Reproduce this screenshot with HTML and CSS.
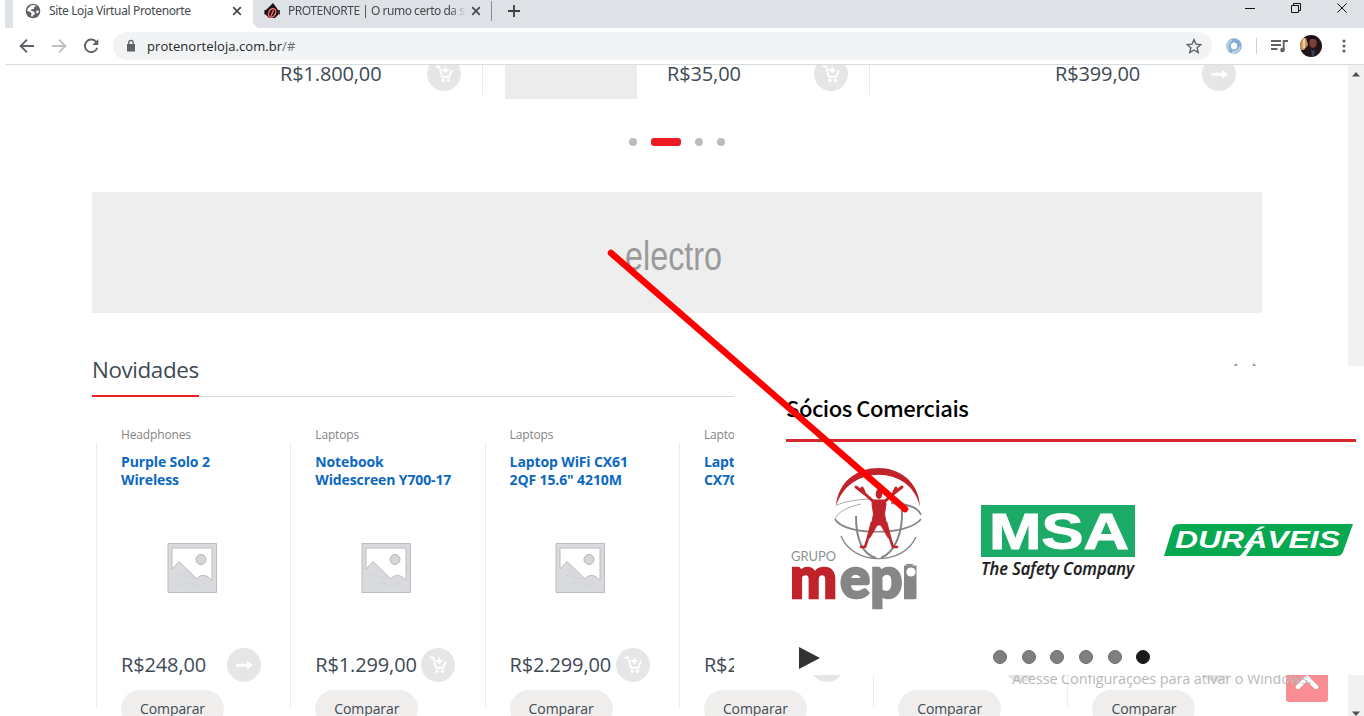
FILE: index.html
```html
<!DOCTYPE html>
<html lang="pt-BR">
<head>
<meta charset="utf-8">
<title>Site Loja Virtual Protenorte</title>
<link rel="stylesheet" href="styles.css">
</head>
<body>
<svg class="defs" width="0" height="0">
  <defs>
    <symbol id="cart" viewBox="0 0 34 34">
      <path d="M9.500 9.500h2.600l3 10.200h7.300l2.300-6" fill="none" stroke="#fff" stroke-width="1.900" stroke-linecap="round" stroke-linejoin="round"/>
      <path d="M18.300 9.500v4M16 12.800l2.300 2.500 2.300-2.500z" fill="#fff" stroke="#fff" stroke-width="1.600"/>
      <circle cx="16" cy="23.300" r="1.700" fill="#fff"/><circle cx="21.500" cy="23.300" r="1.700" fill="#fff"/>
    </symbol>
    <symbol id="arrow" viewBox="0 0 34 34">
      <path d="M10.500 17.200h11" stroke="#fff" stroke-width="3" stroke-linecap="round"/>
      <path d="M20.500 13.500l4.800 3.700-4.800 3.700z" fill="#fff" stroke="#fff" stroke-width="1" stroke-linejoin="round"/>
    </symbol>
    <symbol id="placeholder" viewBox="0 0 50 50">
      <path fill-rule="evenodd" d="M1 .500h48.500v49H1zM5 5v21l7-7.500 18 17.500c3-5 10-5 15 1.500V5z" fill="#d9dade" stroke="#bcbcbf"/>
      <circle cx="34" cy="16.500" r="5" fill="#d5d6da" stroke="#b4b4b6"/>
      <path d="M8 34l8-3 3 3 8 2M12 43l9-4 10 4 8-3" fill="none" stroke="#d1d2d6"/>
    </symbol>
  </defs>
</svg>

<div class="tabs">
  <div class="tab tab-active">
    <svg class="favicon" viewBox="0 0 16 16"><circle cx="8" cy="8" r="7.300" fill="#5f6368"/><path d="M6 2.200L2.800 5.400 2.200 8l3 .800 1.500 1.800-.700 1.700 1 2 .900-1.900 2.200-1.700-1-2-3.200-.900.600-1.600 2.300-.200.400-1.700 2.100-1.200L9 1.900zM11 8l2.800-.800-.500 2.600-1.500 1z" fill="#fff"/></svg>
    <span class="tab-title">Site Loja Virtual Protenorte</span>
    <svg class="close" viewBox="0 0 10 10"><path d="M1.200 1.200l7.600 7.600M8.800 1.200L1.200 8.800"/></svg>
  </div>
  <div class="tab tab-idle">
    <svg class="favicon" viewBox="0 0 16 16"><path d="M2 7l3-3 4-4 3 4 2 3v5l-3 3H5l-3-3z" fill="#1c1012"/><ellipse cx="8.300" cy="9.800" rx="3.300" ry="4.600" transform="rotate(28 8 9.500)" fill="#1c1012" stroke="#ef6a70" stroke-width="1.500"/><path d="M7 13l2.500-6" stroke="#e6686b" stroke-width="1.400"/><path d="M1.200 7v4.500M15 7v4.500" stroke="#1c1012" stroke-width="1.600"/></svg>
    <span class="tab-title">PROTENORTE | O rumo certo da s</span>
    <svg class="close" viewBox="0 0 10 10"><path d="M1.200 1.200l7.600 7.600M8.800 1.200L1.200 8.800"/></svg>
  </div>
  <i class="tab-divider"></i>
  <svg class="plus" viewBox="0 0 12 12"><path d="M6 0v12M0 6h12" stroke="#3c4043" stroke-width="1.800"/></svg>
  <svg class="window-buttons" viewBox="0 0 106 14"><path d="M1 8.500h10M47.500 5.500h7v7h-7zM49.500 5.500v-2h7v7h-2M93.500 3.500l9 9M102.500 3.500l-9 9" fill="none" stroke="#111"/></svg>
</div>

<div class="toolbar">
  <svg class="nav" viewBox="0 0 80 20"><g fill="none" stroke-width="1.900"><path d="M15 10H2M8 3.600L1.600 10 8 16.400" stroke="#5f6368"/><path d="M33 10h13M40 3.600l6.400 6.400-6.400 6.400" stroke="#bdc1c6"/><path d="M77.300 6.100a6.300 6.300 0 1 0 .900 5.700" stroke="#5f6368"/></g><path d="M79.300 3v6h-6z" fill="#5f6368"/></svg>
  <div class="address">
    <svg class="lock" viewBox="0 0 10 13"><path d="M1 5h8v7.500H1z" fill="#5f6368"/><path d="M2.800 5V3.500a2.200 2.200 0 0 1 4.400 0V5" fill="none" stroke="#5f6368" stroke-width="1.300"/></svg>
    <span class="url">protenorteloja.com.br<span class="path">/#</span></span>
    <svg class="star" viewBox="0 0 16 16"><path d="M8 1.600l1.900 4.500 4.900.400-3.700 3.200 1.100 4.800L8 12l-4.200 2.500 1.100-4.800L1.200 6.500l4.900-.400z" fill="none" stroke="#5f6368" stroke-width="1.400"/></svg>
  </div>
  <svg class="extension" viewBox="0 0 16 16"><circle cx="8" cy="8" r="5.500" fill="none" stroke="#86add3" stroke-width="4.600"/><path d="M3 12A6.500 6.500 0 0 1 6 2" fill="none" stroke="#b7cfe6" stroke-width="2.200"/><path d="M6 14a6.500 6.500 0 0 0 8-5" fill="none" stroke="#bfd4e8" stroke-width="2"/><ellipse cx="8" cy="8" rx="2.200" ry="3.500" fill="#fff"/></svg>
  <i class="toolbar-divider"></i>
  <svg class="media" viewBox="0 0 17 14"><path d="M0 2h10M0 6h10M0 10h6.500M12.700 11V2H17" fill="none" stroke="#5f6368" stroke-width="1.900"/><circle cx="11.500" cy="11" r="2.300" fill="#5f6368"/></svg>
  <svg class="avatar" viewBox="0 0 22 22"><clipPath id="face"><circle cx="11" cy="11" r="11"/></clipPath><g clip-path="url(#face)"><path d="M0 0h22v22H0z" fill="#21151a"/><path d="M0 3h6l2 7-4 5H0z" fill="#c99862"/><path d="M3 4h2v9H3z" fill="#f0d1a0"/><ellipse cx="13" cy="8" rx="3.700" ry="5" fill="#7d4235"/><path d="M8 4c2-4 8-4 10 1l-4-1z" fill="#1a0d0d"/><path d="M11 14l2 2 2-2-1 8h-2z" fill="#354060"/></g></svg>
  <svg class="menu" viewBox="0 0 4 14"><g fill="#5f6368"><circle cx="2" cy="2" r="1.600"/><circle cx="2" cy="7" r="1.600"/><circle cx="2" cy="12" r="1.600"/></g></svg>
</div>

<div class="viewport">
  <main class="page">
    <section class="carousel">
      <div class="slide"><span class="price">R$1.800,00</span><span class="round"><svg><use href="#cart"/></svg></span></div>
      <div class="slide"><i class="thumb"></i><span class="price">R$35,00</span><span class="round"><svg><use href="#cart"/></svg></span></div>
      <div class="slide"><span class="price">R$399,00</span><span class="round"><svg><use href="#arrow"/></svg></span></div>
    </section>
    <div class="dots"><i></i><i class="on"></i><i></i><i></i></div>
    <div class="banner"><svg viewBox="0 0 100 44"><text x="1" y="33" textLength="97" lengthAdjust="spacingAndGlyphs">electro</text></svg></div>
    <header class="heading"><h2>Novidades</h2><svg viewBox="0 0 24 14"><path d="M4 2L-1 7l5 5M20 2l5 5-5 5" /></svg></header>
    <section class="products">
      <article><div class="category">Headphones</div><h3>Purple Solo 2<br>Wireless</h3><svg class="picture"><use href="#placeholder"/></svg><div class="buy"><span class="price">R$248,00</span><span class="round"><svg><use href="#arrow"/></svg></span></div><span class="compare">Comparar</span></article>
      <article><div class="category">Laptops</div><h3>Notebook<br>Widescreen Y700-17</h3><svg class="picture"><use href="#placeholder"/></svg><div class="buy"><span class="price">R$1.299,00</span><span class="round"><svg><use href="#cart"/></svg></span></div><span class="compare">Comparar</span></article>
      <article><div class="category">Laptops</div><h3>Laptop WiFi CX61<br>2QF 15.6" 4210M</h3><svg class="picture"><use href="#placeholder"/></svg><div class="buy"><span class="price">R$2.299,00</span><span class="round"><svg><use href="#cart"/></svg></span></div><span class="compare">Comparar</span></article>
      <article><div class="category">Laptops</div><h3>Laptop<br>CX70</h3><svg class="picture"></svg><div class="buy"><span class="price">R$2</span><span class="round"></span></div><span class="compare">Comparar</span></article>
      <article><div class="category"></div><h3></h3><svg class="picture"></svg><div class="buy"><span class="price"></span><span class="round"></span></div><span class="compare">Comparar</span></article>
      <article><div class="category"></div><h3></h3><svg class="picture"></svg><div class="buy"><span class="price"></span><span class="round"></span></div><span class="compare">Comparar</span></article>
    </section>
  </main>
  <aside class="scrollbar">
    <svg viewBox="0 0 8 5"><path d="M0 4.500L4 0l4 4.500z"/></svg>
    <svg viewBox="0 0 8 5"><path d="M0 .500L4 5l4-4.500z"/></svg>
  </aside>
</div>

<div class="to-top"><svg viewBox="0 0 24 14"><path d="M3 12l9-9 9 9"/></svg></div>
<div class="watermark">Acesse Configurações para ativar o Windows.</div>

<section class="partners">
  <h2>Sócios Comerciais</h2>
  <div class="logos">
    <svg class="mepi" viewBox="788 462 136 150">
      <path d="M836 507c3-52 82-52 84 0-9-43-73-43-84 0z" fill="#c1232b"/>
      <g fill="none" stroke="#858786">
        <path d="M837 505c13-6 36-6 36-6M835 519c3-7 12-12 26-15" stroke-width=".7"/>
        <path d="M891 503c19 1 28 6 30 12" stroke-width="1.800"/>
        <path d="M835 519c9 17 74 17 86 0" stroke-width="1.700"/>
        <path d="M841 536c12 30 62 30 75 1" stroke-width="1.400"/>
        <path d="M856 516c0 22 6 38 20 42M902 509c1 24-7 43-21 49" stroke-width="2"/>
      </g>
      <g fill="#c1232b" stroke="#c1232b" stroke-linecap="round" stroke-linejoin="round">
        <ellipse cx="879" cy="494" rx="3.300" ry="5" stroke="none"/>
        <path d="M875 503l-10-9-9-7M864 492l-2-4M883 503l10-9 9-7M894 492l2-4" fill="none" stroke-width="3"/>
        <path d="M873 500h12l1 4-1.500 10 2 11h-15l2-11-1.500-10z" stroke-width="1"/>
        <path d="M872 524l-4 14-3 9-4 0M886 524l4 14 3 9 4 0" fill="none" stroke-width="2.600"/>
        <path d="M871 522l-4 16 3 0 8-14 2 0 8 14 3 0-4-16z" stroke-width=".5"/>
      </g>
      <text x="791" y="561" class="grupo" textLength="45" lengthAdjust="spacingAndGlyphs">GRUPO</text>
      <text x="790" y="598" class="me-m" textLength="47" lengthAdjust="spacingAndGlyphs">m</text>
      <clipPath id="low"><path d="M838 564h82v46h-82z"/></clipPath>
      <g clip-path="url(#low)"><text x="840" y="598" class="me-e" textLength="77" lengthAdjust="spacingAndGlyphs">epi</text></g>
      <path d="M904 565.500h12.500v33.500H904z" fill="#858786"/>
      <circle cx="911" cy="572" r="4.600" fill="#fff"/>
    </svg>
    <svg class="msa" viewBox="980 504 156 78">
      <path d="M981 505h154v52H981z" fill="#1bab67"/>
      <text x="989" y="548.500" class="msa-name" textLength="140" lengthAdjust="spacingAndGlyphs">MSA</text>
      <text x="981" y="575" class="msa-tag" textLength="153" lengthAdjust="spacingAndGlyphs">The Safety Company</text>
    </svg>
    <svg class="duraveis" viewBox="1163 523 191 34">
      <path d="M1173 527q2-3 6-3h174l-10 28q-2 4-6 4h-173z" fill="#06a94f"/>
      <text x="1175" y="548" textLength="165" lengthAdjust="spacingAndGlyphs">DURÁVEIS</text>
      <path d="M1240 556l10-12 4 0-8 12z" fill="#fff"/>
    </svg>
  </div>
  <div class="controls">
    <svg viewBox="0 0 21 22"><path d="M0 0l21 11L0 22z" fill="#333"/></svg>
    <div class="pager"><i></i><i></i><i></i><i></i><i></i><i class="on"></i></div>
  </div>
</section>

<svg class="pen" viewBox="0 0 1364 716"><path d="M611 253L905 509" stroke="#f00" stroke-width="6.500" stroke-linecap="round"/></svg>
</body>
</html>
```

FILE: styles.css
```css
* { box-sizing: border-box; }
body { margin: 0; width: 1364px; height: 716px; overflow: hidden; position: relative; display: flex; flex-direction: column; background: #fff; font-family: "Open Sans", sans-serif; color: #3f4a54; }
svg { display: block; flex: none; }
i { display: block; flex: none; }
h2, h3 { margin: 0; font-weight: 400; }
.defs { position: absolute; }

.tabs { height: 28px; flex: none; margin-left: 5px; background: #dee1e6; display: flex; font-family: "Noto Sans", sans-serif; font-size: 12px; color: #45494d; padding-right: 14px; }
.tab { display: flex; height: 28px; padding-top: 3px; }
.tab-active { background: #fff; margin-left: 8px; width: 240px; padding-left: 12px; }
.tab-idle { width: 238px; padding-left: 11px; background: radial-gradient(circle at 8px 20px, #dee1e6 8px, transparent 8.500px) 0 0 / 8px 28px no-repeat, linear-gradient(#dee1e6, #dee1e6) 8px 0 no-repeat, linear-gradient(#dee1e6 20px, #fff 20px); }
.favicon { width: 16px; height: 16px; }
.tab-title { width: 178px; margin-left: 8px; line-height: 16px; white-space: nowrap; overflow: hidden; letter-spacing: -.35px; }
.tab-idle .tab-title { width: 176px; letter-spacing: -.48px; -webkit-mask-image: linear-gradient(90deg, #000 92%, transparent 101%); mask-image: linear-gradient(90deg, #000 92%, transparent 101%); }
.close { width: 10px; height: 10px; margin: 3px 0 0 5px; fill: none; stroke: #45494d; stroke-width: 1.700; }
.tab-idle .close { margin-left: 7px; }
.tab-divider { width: 1px; height: 20px; background: #888c91; margin-top: 1px; }
.plus { width: 12px; height: 12px; margin: 5px 0 0 16px; }
.window-buttons { width: 106px; height: 14px; margin: 0 0 0 auto; }

.toolbar { height: 37px; flex: none; margin-left: 5px; border-bottom: 1px solid #d9dce1; display: flex; align-items: center; padding: 0 18px 0 14px; }
.nav { width: 80px; height: 20px; }
.address { width: 1099px; height: 28px; margin-left: 14px; border-radius: 14px; background: #f1f3f4; display: flex; align-items: center; padding: 0 10px 0 13px; }
.lock { width: 10px; height: 13px; margin-top: -2px; }
.url { margin-left: 11px; font-size: 13px; line-height: 18px; color: #25282c; letter-spacing: .06px; }
.path { color: #6b6f74; }
.star { width: 16px; height: 16px; margin-left: auto; }
.extension { width: 16px; height: 16px; margin-left: 14px; }
.toolbar-divider { width: 1px; height: 16px; background: #cfd1d5; margin-left: 14px; }
.media { width: 17px; height: 14px; margin-left: 14px; }
.avatar { width: 22px; height: 22px; margin-left: 12px; }
.menu { width: 4px; height: 14px; margin-left: 20px; }

.viewport { flex: 1; display: flex; min-height: 0; }
.page { width: 1348px; padding-left: 92px; overflow: hidden; }
.price { font-size: 20px; line-height: 26px; white-space: nowrap; letter-spacing: -.14px; }
.round { width: 34px; height: 34px; border-radius: 50%; background: #e6e6e6; flex: none; }
.round svg { width: 34px; height: 34px; }
.carousel { display: grid; grid-template-columns: 387px 387px 387px; margin: -8px 0 0 4px; height: 42px; }
.slide { display: flex; height: 38px; border-right: 1px solid #eaeaea; padding-left: 184px; }
.slide:last-child { border: 0; padding-left: 185px; }
.slide .price { width: 147px; margin-top: 4px; }
.slide .thumb { width: 132px; height: 42px; background: #ececec; margin: 0 30px 0 -162px; }
.dots { display: flex; gap: 14px; margin: 39px 0 0 537px; }
.dots i { width: 8px; height: 8px; border-radius: 4px; background: #bcbcbc; }
.dots .on { width: 30px; border-radius: 3px; background: #ec1c24; }
.banner { width: 1170px; height: 121px; margin-top: 46px; background: #eee; padding: 45px 0 0 532px; }
.banner svg { width: 100px; height: 44px; }
.banner text { font: 40px "Liberation Sans", sans-serif; fill: #9a9a9a; }
.heading { height: 45px; margin-top: 39px; width: 1170px; display: flex; justify-content: space-between; box-shadow: inset 0 -1px #dadada; }
.heading h2 { font-size: 22.400px; letter-spacing: -.4px; line-height: 35px; height: 45px; width: 107px; border-bottom: 2px solid #ec1c24; white-space: nowrap; }
.heading svg { width: 24px; height: 14px; margin: 10px 5px 0 0; fill: none; stroke: #999; stroke-width: 2; }
.products { display: grid; grid-template-columns: repeat(6, 194.300px); margin-left: 4px; padding-top: 29px; }
.products article { padding-left: 25px; background: linear-gradient(#ededed, #ededed) 0 17px / 1px 264px no-repeat; }
.category { height: 18px; font-size: 12px; line-height: 18px; letter-spacing: -.15px; color: #848484; }
.products h3 { height: 36px; margin-top: 9px; font-weight: 700; font-size: 14px; letter-spacing: -.12px; line-height: 18px; color: #0b68c1; white-space: nowrap; }
.picture { width: 50px; height: 50px; margin: 54px 0 0 45.800px; }
.buy { width: 140.200px; height: 34px; margin-top: 55px; display: flex; justify-content: space-between; align-items: center; }
.compare { display: block; width: 103px; height: 38px; margin-top: 8px; border-radius: 19px; background: #efeeec; font-size: 14px; letter-spacing: -.1px; line-height: 38px; text-align: center; }
.scrollbar { width: 16px; background: #f1f1f1; display: flex; flex-direction: column; justify-content: space-between; align-items: center; padding: 7px 0 0; }
.scrollbar svg { width: 8px; height: 5px; fill: #505050; }

.to-top { position: absolute; left: 1286px; top: 660px; width: 42px; height: 42px; border-radius: 3px; background: #f88e93; padding: 15px 9px; }
.to-top svg { width: 24px; height: 14px; fill: none; stroke: #fff; stroke-width: 4.500; stroke-linecap: round; }
.watermark { position: absolute; left: 1012px; top: 669px; font-size: 14.500px; letter-spacing: -.13px; line-height: 20px; color: #b9b9b9; white-space: nowrap; }
.partners { position: absolute; left: 734px; top: 366px; width: 630px; height: 309px; background: #fff; padding: 25px 8px 0 52px; }
.partners h2 { height: 51px; border-bottom: 3px solid #d4282c; font-family: "Noto Sans CJK SC", sans-serif; font-weight: 500; font-size: 22px; line-height: 32px; color: #000; letter-spacing: -.48px; white-space: nowrap; }
.logos { display: flex; height: 150px; margin-top: 20px; }
.mepi { width: 136px; height: 150px; margin-left: 2px; }
.msa { width: 156px; height: 78px; margin: 42px 0 0 56px; }
.duraveis { width: 191px; height: 34px; margin: 61px -10px 0 27px; }
.grupo { font: 14px Lato, sans-serif; fill: #8e9090; }
.me-m, .me-e { font: 900 57px Lato, sans-serif; stroke-width: 2.500; }
.me-m { fill: #c1232b; stroke: #c1232b; }
.me-e { fill: #858786; stroke: #858786; }
.msa-name { font: 700 50px "Liberation Sans", sans-serif; fill: #fff; stroke: #fff; stroke-width: 1; }
.msa-tag { font: italic 600 17.500px "Open Sans", sans-serif; fill: #1d1d1d; stroke: #1d1d1d; stroke-width: .2; }
.duraveis text { font: italic 700 24px "Liberation Sans", sans-serif; fill: #fff; }
.controls { display: flex; margin: 35px 0 0 13px; }
.controls svg { width: 21px; height: 22px; }
.pager { display: flex; gap: 14.700px; margin: 3px 0 0 173px; }
.pager i { width: 14px; height: 14px; border-radius: 50%; background: #7f7f7f; border: 1px solid #6e6e6e; }
.pager .on { background: #1a1a1a; border-color: #1a1a1a; }
.pen { position: absolute; left: 0; top: 0; width: 1364px; height: 716px; }
```
